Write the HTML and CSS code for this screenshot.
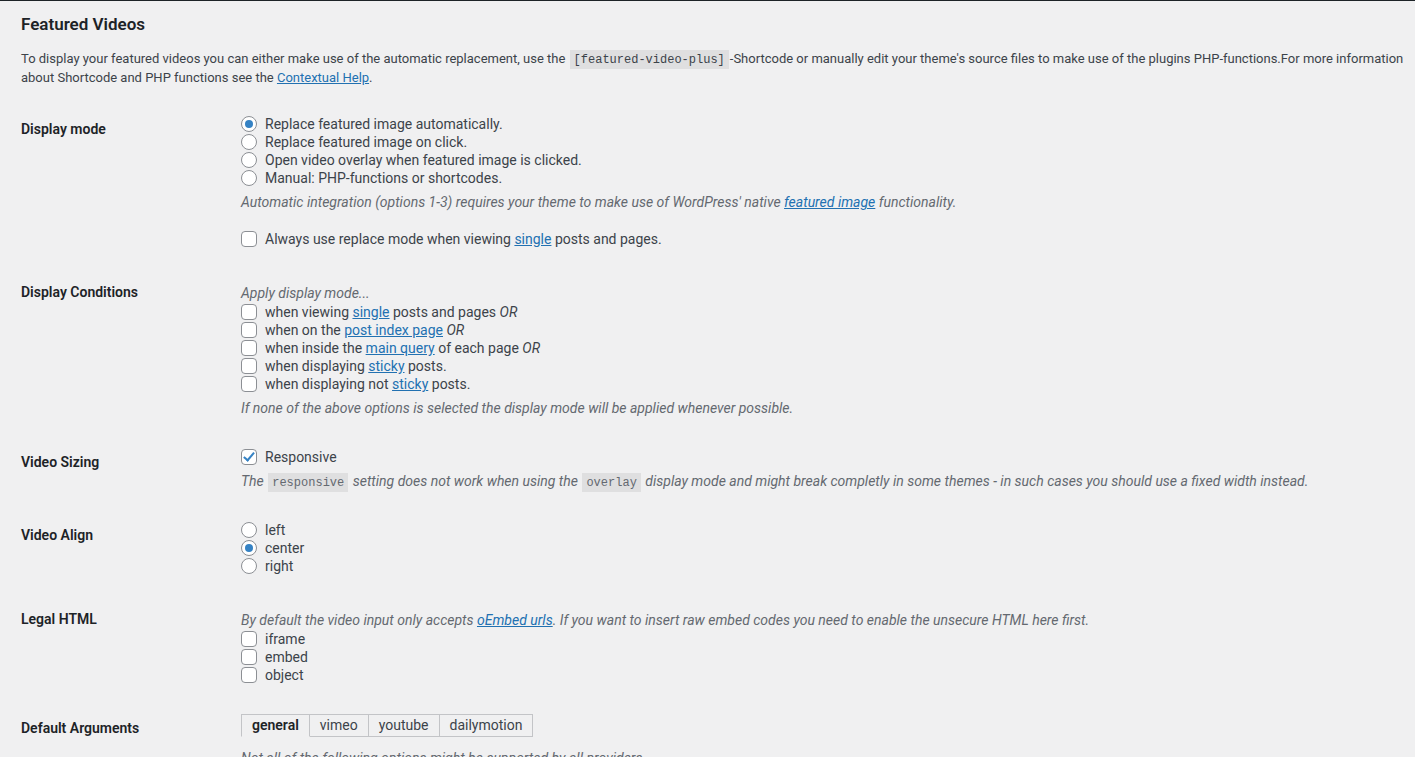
FILE: index.html
```html
<!DOCTYPE html>
<html lang="en">
<head>
    <meta charset="UTF-8">
    <title>Featured Videos Settings</title>
    <link rel="stylesheet" href="styles.css">
</head>
<body>
    <div class="adminbar-edge"></div>

    <div class="wrap">
        <h2>Featured Videos</h2>
        <p class="intro">To display your featured videos you can either make use of the automatic replacement, use the <code>[featured-video-plus]</code>-Shortcode or manually edit your theme's source files to make use of the plugins PHP-functions.For more information about Shortcode and PHP functions see the <a href="#">Contextual Help</a>.</p>

        <table class="form-table">
            <tr>
                <th>Display mode</th>
                <td>
                    <label class="opt"><input type="radio" name="mode" checked>Replace featured image automatically.</label>
                    <label class="opt"><input type="radio" name="mode">Replace featured image on click.</label>
                    <label class="opt"><input type="radio" name="mode">Open video overlay when featured image is clicked.</label>
                    <label class="opt"><input type="radio" name="mode">Manual: PHP-functions or shortcodes.</label>
                    <p class="description">Automatic integration (options 1-3) requires your theme to make use of WordPress' native <a href="#">featured image</a> functionality.</p>
                    <label class="opt spaced"><input type="checkbox">Always use replace mode when viewing&nbsp;<a href="#">single</a>&nbsp;posts and pages.</label>
                </td>
            </tr>
            <tr>
                <th>Display Conditions</th>
                <td>
                    <p class="description">Apply display mode...</p>
                    <label class="opt"><input type="checkbox">when viewing&nbsp;<a href="#">single</a>&nbsp;posts and pages&nbsp;<em>OR</em></label>
                    <label class="opt"><input type="checkbox">when on the&nbsp;<a href="#">post index page</a>&nbsp;<em>OR</em></label>
                    <label class="opt"><input type="checkbox">when inside the&nbsp;<a href="#">main query</a>&nbsp;of each page&nbsp;<em>OR</em></label>
                    <label class="opt"><input type="checkbox">when displaying&nbsp;<a href="#">sticky</a>&nbsp;posts.</label>
                    <label class="opt"><input type="checkbox">when displaying not&nbsp;<a href="#">sticky</a>&nbsp;posts.</label>
                    <p class="description">If none of the above options is selected the display mode will be applied whenever possible.</p>
                </td>
            </tr>
            <tr>
                <th>Video Sizing</th>
                <td>
                    <label class="opt"><input type="checkbox" checked>Responsive</label>
                    <p class="description">The <code>responsive</code> setting does not work when using the <code>overlay</code> display mode and might break completly in some themes - in such cases you should use a fixed width instead.</p>
                </td>
            </tr>
            <tr>
                <th>Video Align</th>
                <td>
                    <label class="opt"><input type="radio" name="align">left</label>
                    <label class="opt"><input type="radio" name="align" checked>center</label>
                    <label class="opt"><input type="radio" name="align">right</label>
                </td>
            </tr>
            <tr>
                <th>Legal HTML</th>
                <td>
                    <p class="description">By default the video input only accepts <a href="#">oEmbed urls</a>. If you want to insert raw embed codes you need to enable the unsecure HTML here first.</p>
                    <label class="opt"><input type="checkbox">iframe</label>
                    <label class="opt"><input type="checkbox">embed</label>
                    <label class="opt"><input type="checkbox">object</label>
                </td>
            </tr>
            <tr>
                <th>Default Arguments</th>
                <td>
                    <ul class="tabs">
                        <li class="active">general</li>
                        <li>vimeo</li>
                        <li>youtube</li>
                        <li>dailymotion</li>
                    </ul>
                    <p class="description">Not all of the following options might be supported by all providers.</p>
                </td>
            </tr>
        </table>
    </div>
</body>
</html>
```

FILE: styles.css
```css
html, body {
    margin: 0;
    padding: 0;
    background-color: #f0f0f1;
}

body {
    font-family: Roboto, "Liberation Sans", sans-serif;
    font-size: 13px;
    color: #3c434a;
}

a {
    color: #2271b1;
}

.adminbar-edge {
    height: 1px;
    background-color: #1d2327;
}

.wrap {
    padding: 0 10px 0 21px;
}

h2 {
    margin: 11px 0 0;
    font-size: 17px;
    line-height: 24px;
    font-weight: 600;
    color: #1d2327;
}

.intro {
    margin: 13px 0 0;
    line-height: 19px;
}

code {
    font-family: "Liberation Mono", monospace;
    font-size: 12px;
    line-height: 1;
    background-color: rgba(0, 0, 0, 0.07);
    padding: 3px 4px 2px;
    margin: 0 1px;
}

.form-table {
    border-collapse: collapse;
    margin-top: 13px;
    width: 100%;
}

.form-table th {
    width: 200px;
    padding: 20px 10px 20px 0;
    text-align: left;
    vertical-align: top;
    font-size: 14px;
    line-height: 18px;
    font-weight: 600;
    color: #1d2327;
}

.form-table td {
    padding: 15px 10px;
    vertical-align: top;
    font-size: 14px;
    line-height: 18px;
}

.opt {
    display: flex;
    align-items: center;
    height: 18px;
    white-space: nowrap;
}

.opt.spaced {
    margin-top: 18px;
}

.description {
    margin: 6px 0 0;
    font-size: 14px;
    line-height: 19px;
    font-style: italic;
    color: #646970;
}

.description code {
    font-style: normal;
}

input[type="radio"],
input[type="checkbox"] {
    appearance: none;
    -webkit-appearance: none;
    position: relative;
    box-sizing: border-box;
    width: 16px;
    height: 16px;
    margin: 0 8px 0 0;
    flex-shrink: 0;
    border: 1px solid #8c8f94;
    background: #fff;
}

input[type="radio"] {
    border-radius: 50%;
}

input[type="checkbox"] {
    border-radius: 4px;
}

input[type="radio"]:checked::before {
    content: "";
    position: absolute;
    left: 3px;
    top: 3px;
    width: 8px;
    height: 8px;
    border-radius: 50%;
    background: #3582c4;
}

input[type="checkbox"]:checked::before {
    content: "";
    position: absolute;
    left: 4px;
    top: 0;
    width: 4px;
    height: 9px;
    border-right: 2px solid #3582c4;
    border-bottom: 2px solid #3582c4;
    transform: rotate(40deg);
}

.tabs {
    display: flex;
    list-style: none;
    margin: 0;
    padding: 0;
}

.tabs li {
    padding: 1px 10px 2px;
    border: 1px solid #c3c4c7;
    border-left: none;
    line-height: 18px;
}

.tabs li:first-child {
    border-left: 1px solid #c3c4c7;
}

.tabs li.active {
    font-weight: 600;
    color: #1d2327;
    border-bottom-color: transparent;
}

.tabs + .description {
    margin-top: 12px;
}
```
